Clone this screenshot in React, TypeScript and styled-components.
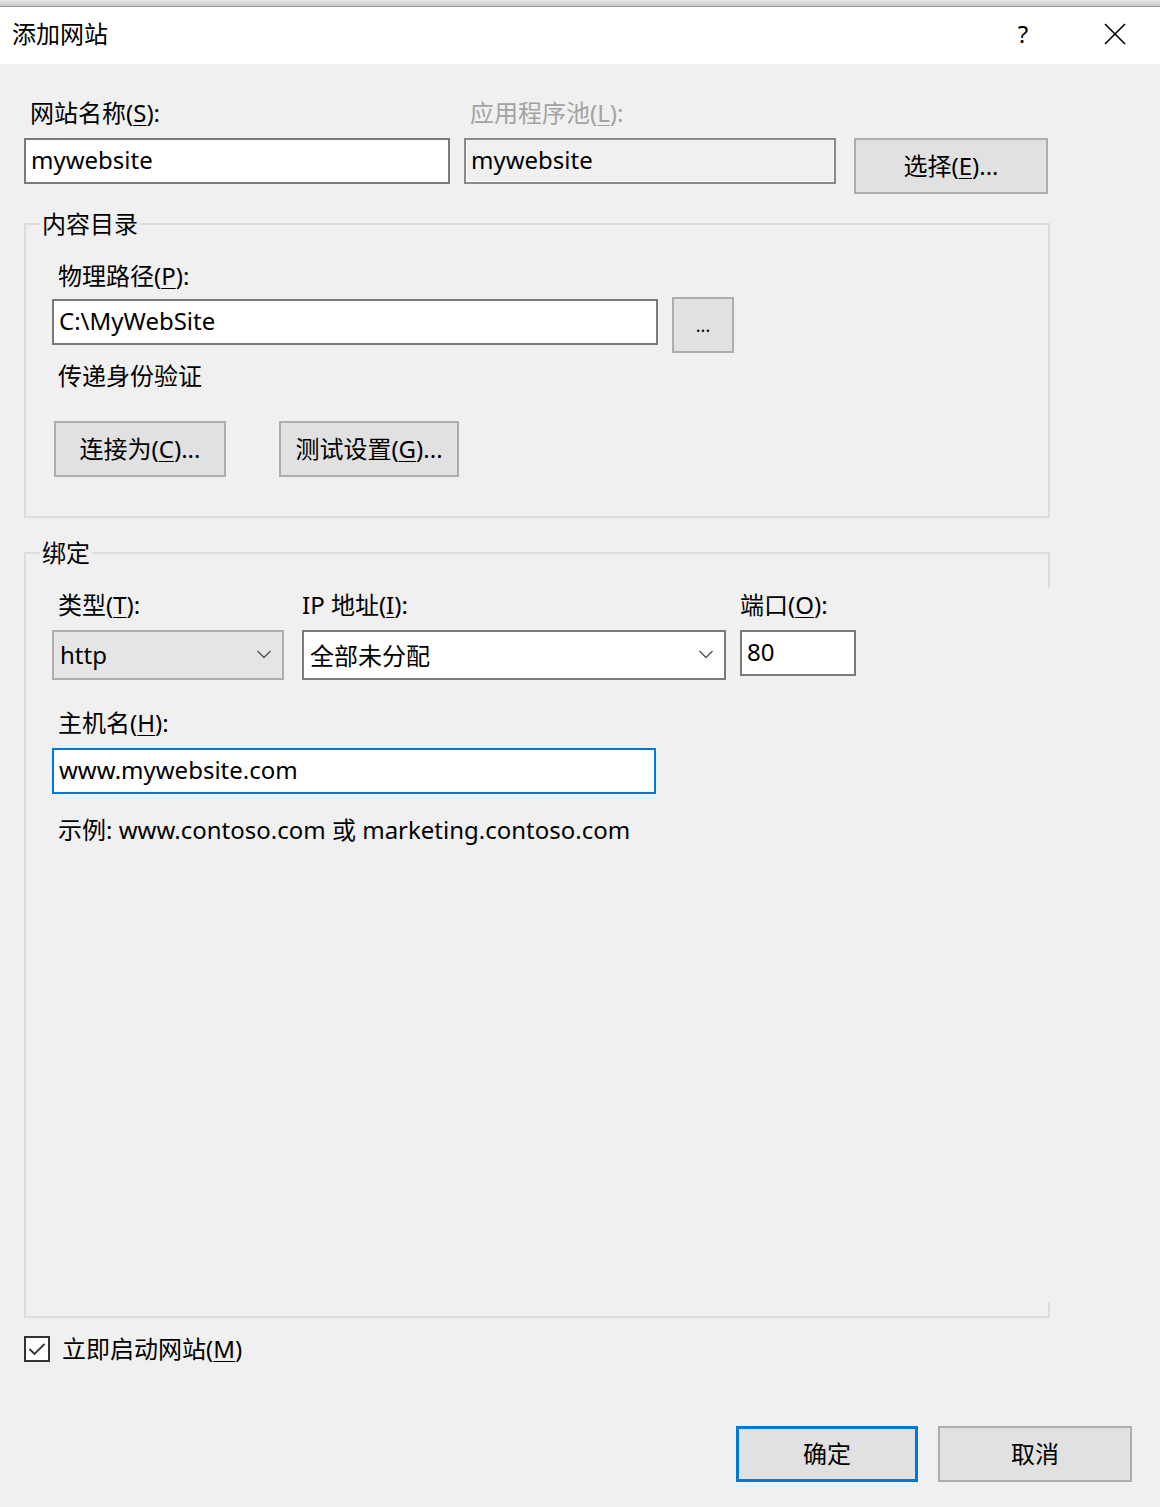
import React from "react";
import styled, { createGlobalStyle } from "styled-components";

const GlobalStyle = createGlobalStyle`
  html, body {
    margin: 0;
    padding: 0;
    background: #f0f0f0;
  }
  body {
    font-family: "Noto Sans", "Noto Sans CJK SC", sans-serif;
    font-size: 24px;
    color: #000;
  }
  u {
    text-underline-offset: 3px;
    text-decoration-thickness: 1px;
  }
`;

const Window = styled.div`
  width: 1160px;
  height: 1507px;
  display: flex;
  flex-direction: column;
  background: #f0f0f0;
  overflow: hidden;
`;

const BehindStrip = styled.div`
  height: 6px;
  background: linear-gradient(#e6e6e6, #c9c9c9);
  border-bottom: 1px solid #9a9a9a;
`;

const TitleBar = styled.div`
  height: 57px;
  background: #fff;
  display: flex;
  align-items: center;
  padding: 0 22px 0 12px;
`;

const Title = styled.div`
  flex: 1;
  line-height: 30px;
  margin-top: -4px;
`;

const TitleIcon = styled.div`
  width: 46px;
  display: flex;
  justify-content: center;
  align-items: center;
  font-family: "Noto Sans", sans-serif;
  margin-left: 46px;
  margin-top: -4px;
`;

const Body = styled.div`
  flex: 1;
  display: flex;
  flex-direction: column;
  padding: 34px 28px 0 24px;
`;

const TopGrid = styled.div`
  display: grid;
  grid-template-columns: 440px 390px 194px;
  row-gap: 10px;
  align-items: start;
`;

const Label = styled.div<{ $indent?: number; $disabled?: boolean }>`
  line-height: 30px;
  height: 30px;
  padding-left: ${(p) => p.$indent ?? 6}px;
  color: ${(p) => (p.$disabled ? "#a3a3a3" : "#000")};
  white-space: nowrap;
`;

const TextBox = styled.input<{ $w: number; $variant?: "disabled" | "focus" }>`
  box-sizing: border-box;
  width: ${(p) => p.$w}px;
  height: 46px;
  margin: 0;
  padding: 0 5px 3px;
  font: inherit;
  color: #000;
  outline: none;
  border: 2px solid
    ${(p) =>
      p.$variant === "focus" ? "#0078d7" : p.$variant === "disabled" ? "#8a8a8a" : "#7a7a7a"};
  background: ${(p) => (p.$variant === "disabled" ? "#f0f0f0" : "#fff")};
  box-shadow: ${(p) => (p.$variant === "disabled" ? "inset 0 0 0 1px #fbfbfb" : "none")};
`;

const Button = styled.button<{ $w: number; $default?: boolean }>`
  box-sizing: border-box;
  width: ${(p) => p.$w}px;
  height: 56px;
  margin: 0;
  padding: 0 0 4px;
  font: inherit;
  color: #000;
  background: #e1e1e1;
  border: ${(p) => (p.$default ? "3px solid #0078d7" : "2px solid #adadad")};
  cursor: default;
`;

const Group = styled.fieldset<{ $partialRight?: boolean }>`
  position: relative;
  box-sizing: border-box;
  width: 1026px;
  margin: 0;
  padding: 22px 24px 39px 26px;
  border: 2px solid #dcdcdc;
  border-right-color: ${(p) => (p.$partialRight ? "transparent" : "#dcdcdc")};

  ${(p) =>
    p.$partialRight &&
    `
    &::before, &::after {
      content: "";
      position: absolute;
      right: -2px;
      width: 2px;
      background: #dcdcdc;
    }
    &::before { top: -16px; height: 36px; }
    &::after { bottom: -2px; height: 16px; }
  `}
`;

const Legend = styled.legend`
  margin-left: -12px;
  padding: 0 2px;
  line-height: 30px;
`;

const Stack = styled.div<{ $gap: number }>`
  display: flex;
  flex-direction: column;
  gap: ${(p) => p.$gap}px;
`;

const Row = styled.div<{ $gap: number; $top?: number; $left?: number }>`
  display: flex;
  align-items: flex-start;
  gap: ${(p) => p.$gap}px;
  margin-top: ${(p) => p.$top ?? 0}px;
  margin-left: ${(p) => p.$left ?? 0}px;
`;

const BrowseButton = styled(Button)`
  margin-top: -2px;
  font-size: 18px;
  padding-bottom: 0;
`;

const BindBody = styled.div`
  min-height: 687px;
`;

const BindGrid = styled.div`
  display: grid;
  grid-template-columns: 250px 438px 116px;
  row-gap: 10px;
  align-items: start;
`;

const Select = styled.div<{ $w: number; $disabled?: boolean }>`
  box-sizing: border-box;
  width: ${(p) => p.$w}px;
  height: 50px;
  display: flex;
  align-items: center;
  padding: 0 10px 2px 6px;
  border: 2px solid ${(p) => (p.$disabled ? "#adadad" : "#7a7a7a")};
  background: ${(p) => (p.$disabled ? "#e5e5e5" : "#fff")};
`;

const SelectText = styled.span`
  flex: 1;
`;

const Chevron = () => (
  <svg width="16" height="10" viewBox="0 0 16 10">
    <polyline points="1.5,2 8,8.5 14.5,2" fill="none" stroke="#555" strokeWidth="1.4" />
  </svg>
);

const Hint = styled.div`
  line-height: 30px;
  padding-left: 6px;
  margin-top: 21px;
`;

const CheckRow = styled.label`
  display: flex;
  align-items: center;
  gap: 12px;
  margin-top: 16px;
  line-height: 30px;
`;

const CheckBox = styled.span`
  box-sizing: border-box;
  width: 26px;
  height: 26px;
  border: 2px solid #333;
  background: #fff;
  display: flex;
  align-items: center;
  justify-content: center;
`;

const Footer = styled.div`
  display: flex;
  justify-content: flex-end;
  gap: 20px;
  margin-top: 62px;
`;

const CloseIcon = () => (
  <svg width="22" height="22" viewBox="0 0 22 22">
    <path d="M1 1 L21 21 M21 1 L1 21" stroke="#000" strokeWidth="1.6" fill="none" />
  </svg>
);

export default function App() {
  return (
    <Window>
      <GlobalStyle />
      <BehindStrip />
      <TitleBar>
        <Title>添加网站</Title>
        <TitleIcon>?</TitleIcon>
        <TitleIcon>
          <CloseIcon />
        </TitleIcon>
      </TitleBar>

      <Body>
        <TopGrid>
          <Label>
            网站名称(<u>S</u>):
          </Label>
          <Label $disabled>
            应用程序池(<u>L</u>):
          </Label>
          <div />
          <TextBox $w={426} readOnly value="mywebsite" />
          <TextBox $w={372} $variant="disabled" readOnly value="mywebsite" />
          <Button $w={194}>
            选择(<u>E</u>)...
          </Button>
        </TopGrid>

        <div style={{ height: 15 }} />

        <Group>
          <Legend>内容目录</Legend>
          <Stack $gap={8}>
            <Label>
              物理路径(<u>P</u>):
            </Label>
            <Row $gap={14}>
              <TextBox $w={606} readOnly value="C:\MyWebSite" />
              <BrowseButton $w={62}>...</BrowseButton>
            </Row>
          </Stack>
          <Label style={{ marginTop: 8 }}>传递身份验证</Label>
          <Row $gap={53} $top={30} $left={2}>
            <Button $w={172}>
              连接为(<u>C</u>)...
            </Button>
            <Button $w={180}>
              测试设置(<u>G</u>)...
            </Button>
          </Row>
        </Group>

        <div style={{ height: 20 }} />

        <Group $partialRight>
          <Legend>绑定</Legend>
          <BindBody>
            <BindGrid>
              <Label>
                类型(<u>T</u>):
              </Label>
              <Label $indent={-2}>
                IP 地址(<u>I</u>):
              </Label>
              <Label $indent={0}>
                端口(<u>O</u>):
              </Label>
              <Select $w={232} $disabled>
                <SelectText>http</SelectText>
                <Chevron />
              </Select>
              <Select $w={424}>
                <SelectText>全部未分配</SelectText>
                <Chevron />
              </Select>
              <TextBox $w={116} readOnly value="80" />
            </BindGrid>
            <Stack $gap={10} style={{ marginTop: 28 }}>
              <Label>
                主机名(<u>H</u>):
              </Label>
              <TextBox $w={604} $variant="focus" readOnly value="www.mywebsite.com" />
            </Stack>
            <Hint>示例: www.contoso.com 或 marketing.contoso.com</Hint>
          </BindBody>
        </Group>

        <CheckRow>
          <CheckBox>
            <svg width="18" height="14" viewBox="0 0 18 14">
              <polyline points="1.5,7 6.5,12 16.5,2" fill="none" stroke="#333" strokeWidth="1.8" />
            </svg>
          </CheckBox>
          <span>
            立即启动网站(<u>M</u>)
          </span>
        </CheckRow>

        <Footer>
          <Button $w={182} $default>
            确定
          </Button>
          <Button $w={194}>取消</Button>
        </Footer>
      </Body>
    </Window>
  );
}
